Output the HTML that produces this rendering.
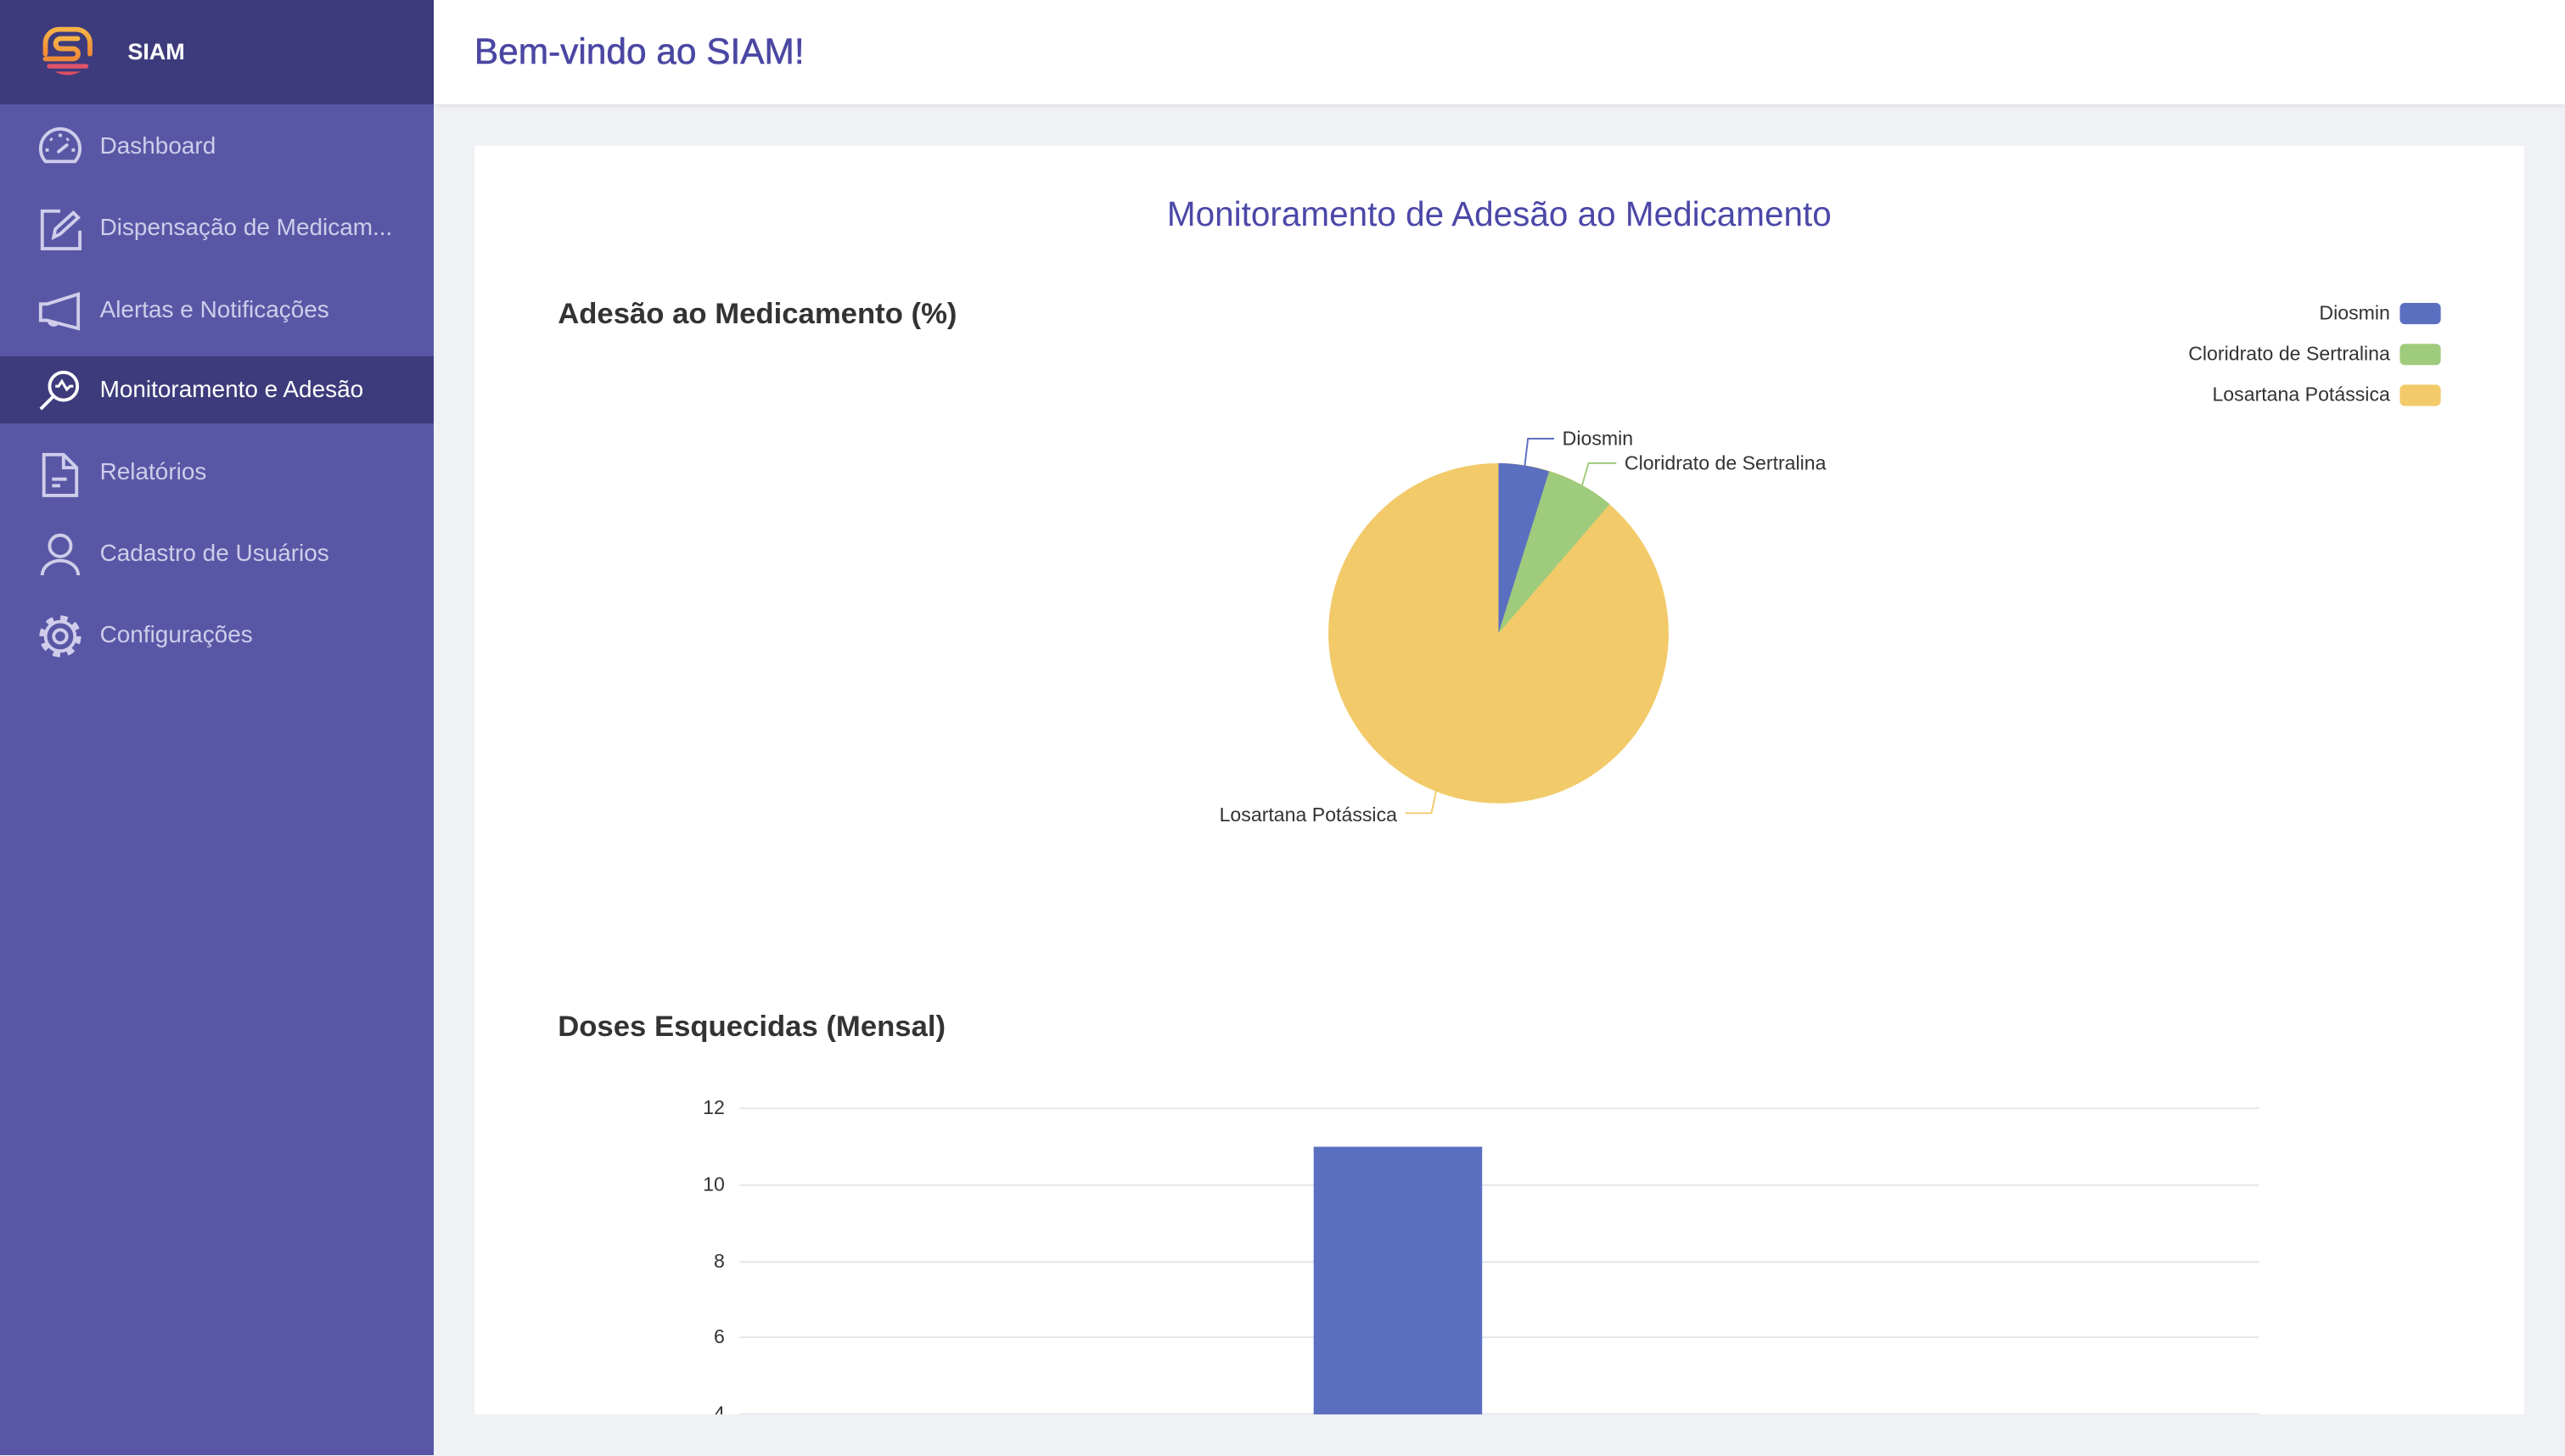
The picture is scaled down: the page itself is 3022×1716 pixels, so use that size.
<!DOCTYPE html>
<html><head><meta charset="utf-8"><style>
html,body{margin:0;padding:0}
body{width:1568px;height:890px;zoom:1.92730;overflow:hidden;background:#f0f1f5;font-family:"Liberation Sans",sans-serif;position:relative}
.sb{position:absolute;left:0;top:0;width:265px;height:890px;background:#5957a5}
.sbh{position:absolute;left:0;top:0;width:265px;height:64px;background:#3e3b7c}
.brand{position:absolute;left:78px;top:24px;color:#fff;font-weight:bold;font-size:14px}
.it{position:absolute;left:0;width:265px;height:41px;color:#cfcdea;font-size:14.5px}
.it span{position:absolute;left:61px;top:12px;white-space:nowrap}
.it svg{position:absolute;left:23px;top:7px}
.act{background:#3e3b7c;color:#fff}
.top{position:absolute;left:265px;top:0;width:1303px;height:64px;background:#fff;box-shadow:0 1px 3px rgba(0,0,0,.08)}
.top span{position:absolute;left:25px;top:19px;font-size:22px;color:#4a47a3;-webkit-text-stroke:0.3px #4a47a3}
.card{position:absolute;left:290px;top:89px;width:1253px;height:776px;background:#fff;overflow:hidden}
.t{position:absolute;white-space:nowrap}
</style></head><body>
<div class="sb">
<div class="sbh">
<svg style="position:absolute;left:25px;top:16px" width="32" height="31" viewBox="0 0 34 33">
<defs><linearGradient id="g" x1="0" y1="0" x2="0" y2="1"><stop offset="0" stop-color="#f6b347"/><stop offset="1" stop-color="#ef8a35"/></linearGradient></defs>
<path d="M3 18 V11 A9 9 0 0 1 12 2 H23 A9 9 0 0 1 32 11 V18" fill="none" stroke="url(#g)" stroke-width="3.2" stroke-linecap="round"/>
<path d="M24 8 H13 A3.3 3.3 0 0 0 13 14.6 H21 A3.3 3.3 0 0 1 21 21.2 H3" fill="none" stroke="url(#g)" stroke-width="3.2" stroke-linecap="round"/>
<rect x="4" y="24.5" width="27" height="3" rx="1.5" fill="#e0536a"/>
<path d="M9 29.5 H26 Q17.5 34 9 29.5Z" fill="#dd4d60"/>
</svg>
<div class="brand">SIAM</div></div>
<div class="it" style="top:69px"><svg width="28" height="26" viewBox="0 0 28 26" fill="none" stroke="#cfcdea" stroke-width="2"><path d="M5 23 H23 A12 12 0 1 0 5 23Z"/><path d="M13 17 L18 13" stroke-linecap="round"/><path d="M5 16h2M21 16h2M8 9l1 1M19 9l-1 1M14 6v2"/></svg><span>Dashboard</span></div>
<div class="it" style="top:119px"><svg width="28" height="28" viewBox="0 0 28 28" fill="none" stroke="#cfcdea" stroke-width="2"><path d="M14 3H3V26H26V15"/><path d="M10 19L11 14L22 4L25 7L14 17Z"/></svg><span>Dispensação de Medicam...</span></div>
<div class="it" style="top:169px"><svg width="28" height="28" viewBox="0 0 28 28" fill="none" stroke="#cfcdea" stroke-width="2"><path d="M2 10H6L25 4V25L6 20H2Z"/><path d="M7 20a3 3 0 0 0 5 2"/></svg><span>Alertas e Notificações</span></div>
<div class="it act" style="top:218px"><svg width="28" height="28" viewBox="0 0 28 28" fill="none" stroke="#fff" stroke-width="2"><circle cx="16" cy="11" r="8.5"/><path d="M10 17L2 25"/><path d="M11 11h2l2-3 3 5 2-2h2" stroke-width="1.6"/></svg><span>Monitoramento e Adesão</span></div>
<div class="it" style="top:268px"><svg width="28" height="30" viewBox="0 0 28 30" fill="none" stroke="#cfcdea" stroke-width="2"><path d="M4 3H16L24 11V28H4Z"/><path d="M16 3V11H24M9 18H18M9 22H14"/></svg><span>Relatórios</span></div>
<div class="it" style="top:318px"><svg width="28" height="28" viewBox="0 0 28 28" fill="none" stroke="#cfcdea" stroke-width="2"><circle cx="14" cy="9" r="6.5"/><path d="M3 27A11 9 0 0 1 25 27"/></svg><span>Cadastro de Usuários</span></div>
<div class="it" style="top:368px"><svg width="28" height="28" viewBox="0 0 28 28" fill="none" stroke="#cfcdea"><circle cx="14" cy="14" r="9" stroke-width="2"/><circle cx="14" cy="14" r="11" stroke-width="3.5" stroke-dasharray="4.3 4.34"/><circle cx="14" cy="14" r="4" stroke-width="2"/></svg><span>Configurações</span></div>
</div>
<div class="top"><span>Bem-vindo ao SIAM!</span></div>
<div class="card">
<div class="t" style="left:0;width:1253px;text-align:center;top:30px;font-size:21px;color:#4b48a8">Monitoramento de Adesão ao Medicamento</div>
<div class="t" style="left:51px;top:93px;font-size:18px;font-weight:bold;color:#333">Adesão ao Medicamento (%)</div>
<div class="t" style="left:51px;top:529px;font-size:18px;font-weight:bold;color:#333">Doses Esquecidas (Mensal)</div>
<svg style="position:absolute;left:0;top:0" width="1253" height="776" font-family="Liberation Sans" font-size="12" fill="#333">
<g transform="translate(-290,-89)">
<rect x="1467" y="185" width="25" height="13" rx="3" fill="#5b6fc1"/>
<rect x="1467" y="210" width="25" height="13" rx="3" fill="#9fcb7c"/>
<rect x="1467" y="235" width="25" height="13" rx="3" fill="#f2ca6a"/>
<text x="1461" y="195" text-anchor="end">Diosmin</text>
<text x="1461" y="220" text-anchor="end">Cloridrato de Sertralina</text>
<text x="1461" y="245" text-anchor="end">Losartana Potássica</text>
<circle cx="916" cy="387" r="104" fill="#f2ca6a"/>
<path d="M916 387 L916 283 A104 104 0 0 1 947 288 Z" fill="#5b6fc1"/>
<path d="M916 387 L947 288 A104 104 0 0 1 984 308 Z" fill="#9fcb7c"/>
<path d="M932 285 L934 268 H950" fill="none" stroke="#5b6fc1"/>
<path d="M967 297 L971 283 H988" fill="none" stroke="#9fcb7c"/>
<path d="M878 483 L875 497 H859" fill="none" stroke="#f2ca6a"/>
<text x="955" y="272">Diosmin</text>
<text x="993" y="287">Cloridrato de Sertralina</text>
<text x="854" y="502" text-anchor="end">Losartana Potássica</text>
<g stroke="#e3e5ea"><path d="M452 677.5H1381M452 724.5H1381M452 771.5H1381M452 817.5H1381M452 864.5H1381"/></g>
<g text-anchor="end"><text x="443" y="681">12</text><text x="443" y="728">10</text><text x="443" y="775">8</text><text x="443" y="821">6</text><text x="443" y="868">4</text></g>
<rect x="803" y="701" width="103" height="170" fill="#5b6fc1"/>
</g></svg>
</div>
</body></html>
